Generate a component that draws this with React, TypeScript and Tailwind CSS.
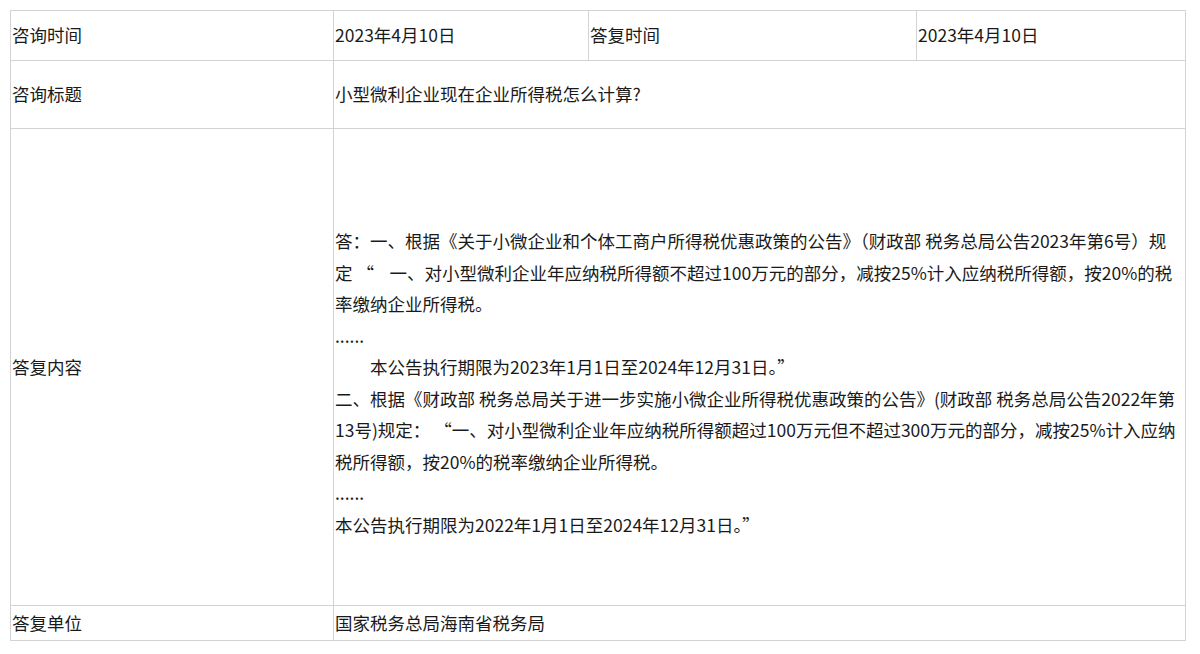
import React from "react";

const cell = "border-r border-b border-[#d3d3d3] flex items-center pl-[1px] overflow-hidden whitespace-nowrap";

const lines: { text: string; indent?: boolean }[] = [
  { text: "" },
  { text: "答：一、根据《关于小微企业和个体工商户所得税优惠政策的公告》（财政部 税务总局公告2023年第6号）规" },
  { text: "定 “    一、对小型微利企业年应纳税所得额不超过100万元的部分，减按25%计入应纳税所得额，按20%的税" },
  { text: "率缴纳企业所得税。" },
  { text: "......" },
  { text: "本公告执行期限为2023年1月1日至2024年12月31日。”", indent: true },
  { text: "二、根据《财政部 税务总局关于进一步实施小微企业所得税优惠政策的公告》(财政部 税务总局公告2022年第" },
  { text: "13号)规定： “一、对小型微利企业年应纳税所得额超过100万元但不超过300万元的部分，减按25%计入应纳" },
  { text: "税所得额，按20%的税率缴纳企业所得税。" },
  { text: "......" },
  { text: "本公告执行期限为2022年1月1日至2024年12月31日。”" },
];

export default function App() {
  return (
    <div
      className="w-[1200px] h-[654px] bg-white pt-[10px] pl-[10px] text-[17.5px] text-[#1a1a1a]"
      style={{ fontFamily: '"Noto Sans CJK SC", "Noto Sans", sans-serif' }}
    >
      <div className="grid w-[1176px] grid-cols-[323px_255px_328px_269px] grid-rows-[50px_68px_477px_35px] border-l border-t border-[#d3d3d3]">
        <div className={cell}>咨询时间</div>
        <div className={cell}>2023年4月10日</div>
        <div className={cell}>答复时间</div>
        <div className={cell}>2023年4月10日</div>

        <div className={cell}>咨询标题</div>
        <div className={`${cell} col-span-3`}>小型微利企业现在企业所得税怎么计算?</div>

        <div className={cell}>答复内容</div>
        <div className={`${cell} col-span-3 !flex-col !items-start justify-center`}>
          {lines.map((l, i) => (
            <div
              key={i}
              className={`h-[31.5px] leading-[31.5px] whitespace-pre ${l.indent ? "pl-[35px]" : ""}`}
            >
              {l.text}
            </div>
          ))}
        </div>

        <div className={cell}>答复单位</div>
        <div className={`${cell} col-span-3`}>国家税务总局海南省税务局</div>
      </div>
    </div>
  );
}
